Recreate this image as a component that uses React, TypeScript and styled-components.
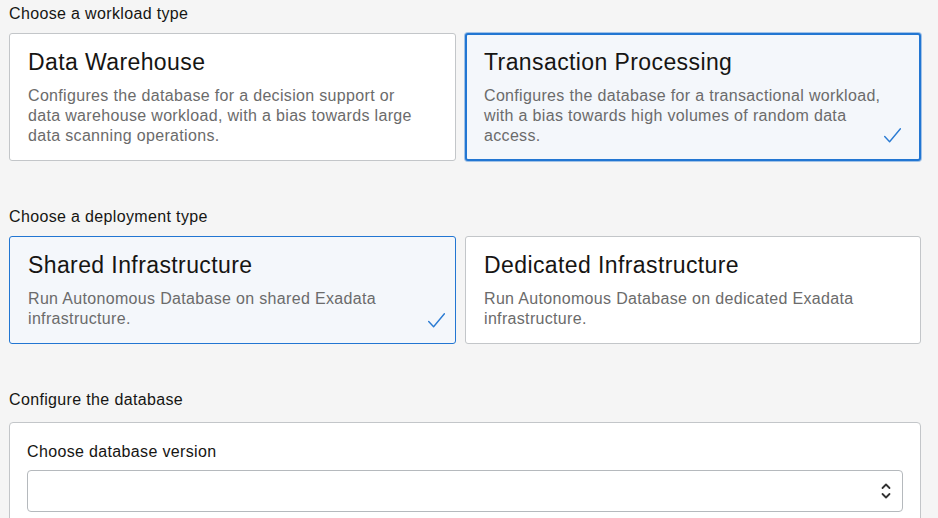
import React from "react";
import styled, { createGlobalStyle, css } from "styled-components";

const GlobalStyle = createGlobalStyle`
  html, body {
    margin: 0;
    padding: 0;
    background: #f5f5f5;
    font-family: "Liberation Sans", Arial, sans-serif;
    overflow: hidden;
  }
`;

const Page = styled.div`
  width: 912px;
  padding: 4px 17px 0 9px;
`;

const Section = styled.section`
  margin-bottom: 46px;
`;

const SectionLabel = styled.div<{ $gap?: number }>`
  font-size: 16px;
  letter-spacing: 0.35px;
  line-height: 20px;
  color: #161513;
  margin-bottom: ${(p) => p.$gap ?? 9}px;
`;

const CardRow = styled.div`
  display: grid;
  grid-template-columns: 447px 456px;
  column-gap: 9px;
  align-items: start;
`;

const Card = styled.div<{ $selected?: boolean; $focused?: boolean }>`
  position: relative;
  box-sizing: border-box;
  background: #ffffff;
  border: 1px solid #c3c6c9;
  border-radius: 3px;
  padding: 14px 36px 14px 18px;
  ${(p) =>
    p.$selected &&
    css`
      background: #f4f7fb;
      border-color: #2276d2;
    `}
  ${(p) =>
    p.$focused &&
    css`
      border-width: 2px;
      padding: 13px 35px 13px 17px;
      box-shadow: 0 0 0 1px rgba(34, 118, 210, 0.4);
    `}
`;

const CardTitle = styled.div`
  font-size: 23px;
  letter-spacing: 0.4px;
  line-height: 28px;
  color: #161513;
  margin-bottom: 10px;
`;

const CardText = styled.div`
  font-size: 16px;
  letter-spacing: 0.33px;
  line-height: 20px;
  color: #6b6b6b;
`;

const Check = styled.svg<{ $right: number; $bottom: number }>`
  position: absolute;
  right: ${(p) => p.$right}px;
  bottom: ${(p) => p.$bottom}px;
  width: 17px;
  height: 15px;
`;

const Panel = styled.div`
  box-sizing: border-box;
  background: #ffffff;
  border: 1px solid #c3c6c9;
  border-radius: 4px;
  padding: 19px 17px 20px 17px;
`;

const FieldLabel = styled.div`
  font-size: 16px;
  letter-spacing: 0.35px;
  line-height: 20px;
  color: #161513;
  margin-bottom: 8px;
`;

const SelectBox = styled.div`
  box-sizing: border-box;
  height: 42px;
  border: 1px solid #b5b9bd;
  border-radius: 4px;
  background: #ffffff;
  display: flex;
  align-items: center;
  justify-content: flex-end;
  padding-right: 11px;
`;

const Chevrons = styled.svg`
  width: 10px;
  height: 18px;
`;

const CheckMark: React.FC<{ right: number; bottom: number }> = ({ right, bottom }) => (
  <Check $right={right} $bottom={bottom} viewBox="0 0 17 15">
    <polyline
      points="0.7,8.6 5.6,13.8 16.4,0.8"
      fill="none"
      stroke="#2a7bd3"
      strokeWidth="1.4"
      strokeLinecap="round"
      strokeLinejoin="round"
    />
  </Check>
);

type Option = {
  title: string;
  text: string;
  selected?: boolean;
  focused?: boolean;
  checkRight?: number;
  checkBottom?: number;
};

const workload: Option[] = [
  {
    title: "Data Warehouse",
    text: "Configures the database for a decision support or data warehouse workload, with a bias towards large data scanning operations.",
  },
  {
    title: "Transaction Processing",
    text: "Configures the database for a transactional workload, with a bias towards high volumes of random data access.",
    selected: true,
    focused: true,
    checkRight: 18,
    checkBottom: 16,
  },
];

const deployment: Option[] = [
  {
    title: "Shared Infrastructure",
    text: "Run Autonomous Database on shared Exadata infrastructure.",
    selected: true,
    checkRight: 10,
    checkBottom: 15,
  },
  {
    title: "Dedicated Infrastructure",
    text: "Run Autonomous Database on dedicated Exadata infrastructure.",
  },
];

const OptionCard: React.FC<{ o: Option }> = ({ o }) => (
  <Card $selected={o.selected} $focused={o.focused}>
    <CardTitle>{o.title}</CardTitle>
    <CardText>{o.text}</CardText>
    {o.selected && <CheckMark right={o.checkRight ?? 12} bottom={o.checkBottom ?? 16} />}
  </Card>
);

export default function App() {
  return (
    <>
      <GlobalStyle />
      <Page>
        <Section>
          <SectionLabel>Choose a workload type</SectionLabel>
          <CardRow>
            {workload.map((o) => (
              <OptionCard key={o.title} o={o} />
            ))}
          </CardRow>
        </Section>
        <Section>
          <SectionLabel>Choose a deployment type</SectionLabel>
          <CardRow>
            {deployment.map((o) => (
              <OptionCard key={o.title} o={o} />
            ))}
          </CardRow>
        </Section>
        <section>
          <SectionLabel $gap={12}>Configure the database</SectionLabel>
          <Panel>
            <FieldLabel>Choose database version</FieldLabel>
            <SelectBox>
              <Chevrons viewBox="0 0 10 18">
                <polyline points="1.5,6 5,2.5 8.5,6" fill="none" stroke="#333" strokeWidth="1.8" strokeLinecap="round" strokeLinejoin="round" />
                <polyline points="1.5,12 5,15.5 8.5,12" fill="none" stroke="#333" strokeWidth="1.8" strokeLinecap="round" strokeLinejoin="round" />
              </Chevrons>
            </SelectBox>
          </Panel>
        </section>
      </Page>
    </>
  );
}
